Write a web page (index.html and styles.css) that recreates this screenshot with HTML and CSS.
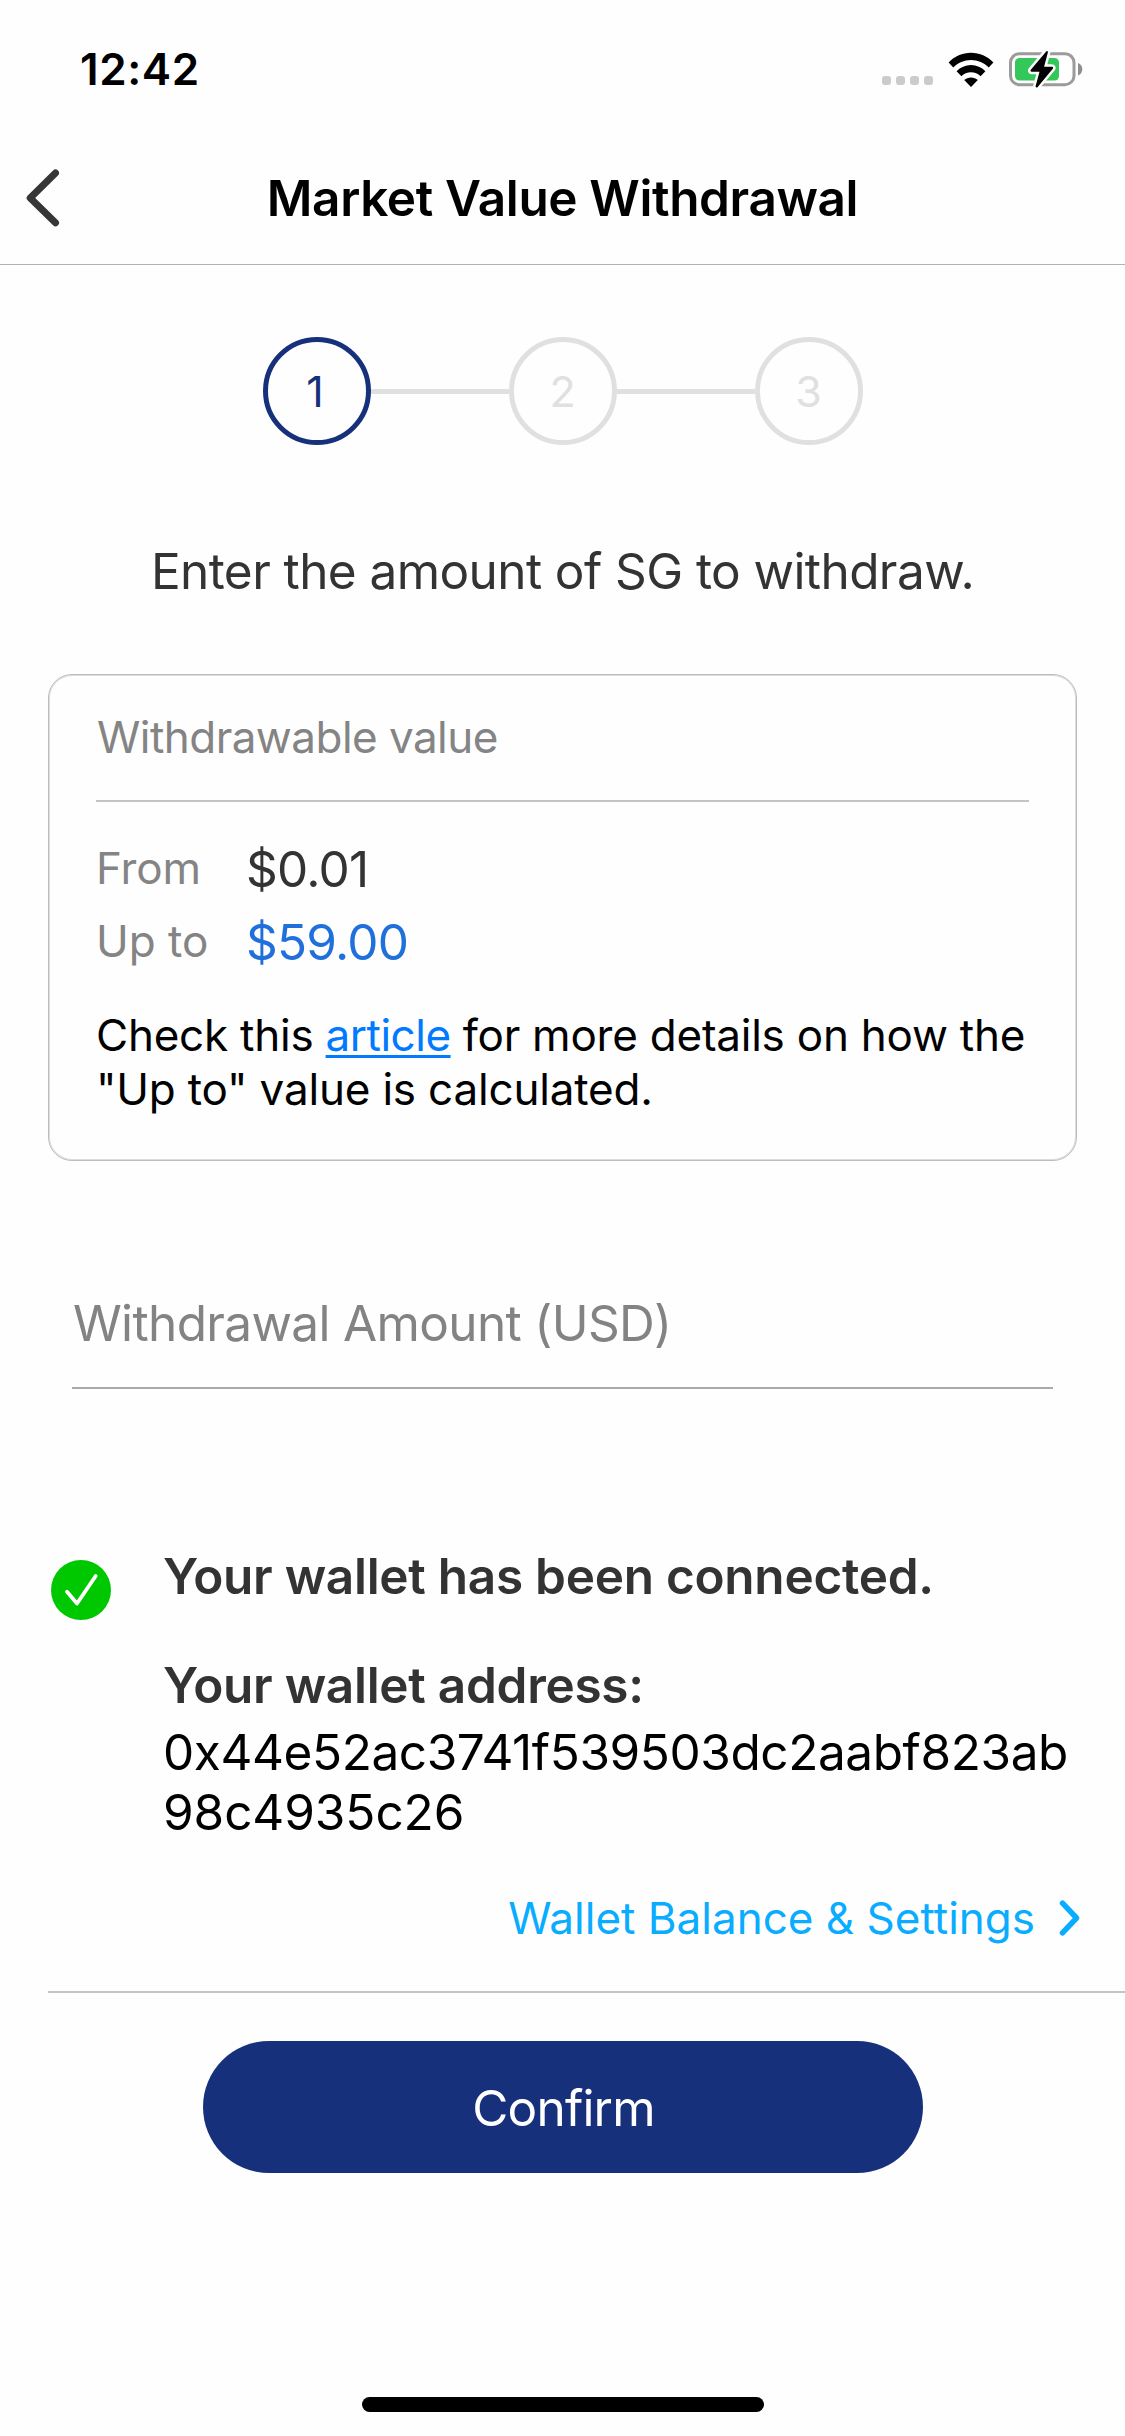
FILE: index.html
```
<!DOCTYPE html>
<html lang="en">
<head>
<meta charset="utf-8">
<title>Market Value Withdrawal</title>
<link rel="stylesheet" href="styles.css">
</head>
<body>
<div class="screen">
  <div class="status">
    <span class="clock">12:42</span>
    <div class="status-icons">
      <div class="cell-dots"><i></i><i></i><i></i><i></i></div>
      <svg class="wifi" width="46" height="35" viewBox="0 0 46 35">
        <path d="M0.6 10.6C6.6 4.300 14.300 0.800 23 0.800S39.400 4.300 45.400 10.600L40.700 15.500C35.900 10.800 29.900 8 23 8S10.100 10.800 5.300 15.500Z"/>
        <path d="M8.600 19.200C12.400 15.300 17.400 13 23 13S33.600 15.300 37.400 19.200L32.600 24.200C30 21.700 26.800 20.200 23 20.200S16 21.700 13.400 24.200Z"/>
        <path d="M16.200 28C18.100 26.300 20.400 25.400 23 25.400S27.900 26.300 29.800 28L23 34.900Z"/>
      </svg>
      <svg class="battery" width="75" height="40" viewBox="-1 0 75 40">
        <rect x="1.500" y="4.700" width="63.500" height="31" rx="9" fill="#fff" stroke="#9b9b9b" stroke-width="3"/>
        <rect x="6" y="9" width="44" height="22.500" rx="4.500" fill="#34c759"/>
        <path d="M69 14C72 15 73.300 17.600 73.300 20.300S72 25.600 69 26.600Z" fill="#8f8f8f"/>
        <path d="M37 2.700L21.800 20.800C21.100 21.700 21.500 22.800 22.700 22.800H30.500L26.700 36.800C26.300 38.600 27.700 39 28.700 37.900L43.800 19.700C44.500 18.800 44.100 17.800 42.900 17.800H35.100L38.800 3.800C39.200 2.100 37.900 1.600 37 2.700Z" fill="#000" stroke="#fff" stroke-width="5" paint-order="stroke"/>
      </svg>
    </div>
  </div>

  <header class="nav">
    <svg class="back" width="34" height="58" viewBox="0 0 34 58"><path d="M29.500 4L4.200 28.900L29.500 53.800"/></svg>
    <h1>Market Value Withdrawal</h1>
  </header>

  <div class="steps">
    <div class="step step-active">1</div>
    <div class="rail"></div>
    <div class="step">2</div>
    <div class="rail"></div>
    <div class="step">3</div>
  </div>

  <p class="prompt">Enter the amount of SG to withdraw.</p>

  <section class="card">
    <h2>Withdrawable value</h2>
    <div class="rows">
      <div class="row"><span class="label">From</span><span class="value">$0.01</span></div>
      <div class="row"><span class="label label-upto">Up to</span><span class="value value-max">$59.00</span></div>
    </div>
    <p class="note">Check this <a class="article">article</a> for more details on how the<br><span class="note-end">"Up to" value is calculated.</span></p>
  </section>

  <div class="field">Withdrawal Amount (USD)</div>

  <section class="wallet">
    <div class="wallet-body">
      <svg class="check" width="60" height="60" viewBox="0 0 60 60">
        <circle cx="30" cy="30" r="30" fill="#00c800"/>
        <path d="M16 31.700L26 43.500L44.700 16" fill="none" stroke="#fff" stroke-width="3.800" stroke-linecap="round" stroke-linejoin="round"/>
      </svg>
      <div class="wallet-text">
        <p class="strong">Your wallet has been connected.</p>
        <p class="strong strong-address">Your wallet address:</p>
        <p class="address">0x44e52ac3741f539503dc2aabf823ab<br><span class="address-end">98c4935c26</span></p>
      </div>
    </div>
    <div class="wallet-link">
      <span>Wallet Balance &amp; Settings</span>
      <svg width="24" height="38" viewBox="0 0 24 38"><path d="M4.500 4.200L18.600 19L4.500 33.800"/></svg>
    </div>
  </section>

  <div class="confirm">Confirm</div>
  <div class="home-bar"></div>
</div>
</body>
</html>
```
FILE: styles.css
```
* { box-sizing: border-box; }

body {
  margin: 0;
  background: #fefefe;
  color: #000;
  font-family: Inter, "Liberation Sans", sans-serif;
  font-size: 49.5px;
}

h1, h2, p { margin: 0; font-weight: 400; }
svg { display: block; flex: none; }

.screen {
  display: flex;
  flex-direction: column;
  width: 1125px;
  height: 2436px;
  overflow: hidden;
}

/* Status bar */
.status {
  display: flex;
  align-items: center;
  justify-content: space-between;
  height: 138px;
  padding: 0 42px 0 80px;
}
.clock { font-size: 44px; font-weight: 600; letter-spacing: 0.6px; }
.status-icons { display: flex; align-items: center; }
.cell-dots { display: flex; gap: 5px; margin: 23px 15px 0 0; }
.cell-dots i { width: 9px; height: 9px; border-radius: 3px; background: #cbcbcb; }
.wifi { margin-right: 14px; }

/* Navigation header */
.nav {
  display: grid;
  grid-template-columns: 200px 1fr 200px;
  align-items: center;
  height: 127px;
  padding-bottom: 6px;
  border-bottom: 1px solid #b2b2b2;
}
.nav h1 {
  font-size: 49.5px;
  font-weight: 600;
  letter-spacing: -0.38px;
  text-align: center;
  white-space: nowrap;
}
.back {
  margin-left: 26px;
  fill: none;
  stroke: #363636;
  stroke-width: 7;
  stroke-linecap: round;
  stroke-linejoin: round;
}

/* Step indicator */
.steps {
  display: flex;
  align-items: center;
  justify-content: center;
  margin-top: 72px;
}
.step {
  display: flex;
  align-items: center;
  justify-content: center;
  width: 108px;
  height: 108px;
  padding-bottom: 1px;
  border: 5px solid #e0e0e0;
  border-radius: 50%;
  color: #e0e0e0;
  font-size: 43px;
}
.step-active { padding-right: 3px; border-color: #16307c; color: #16307c; }
.rail { width: 138px; height: 5px; background: #e0e0e0; }

.prompt {
  margin-top: 96px;
  color: #333;
  line-height: 61px;
  letter-spacing: -0.58px;
  text-align: center;
}

/* Withdrawable value card */
.card {
  height: 487px;
  margin: 72px 48px 0;
  padding: 0 47px;
  border: 1px solid #bcbcbc;
  border-radius: 24px;
  box-shadow: inset 0 0 0 1px #dcdcdc;
}
.card h2 {
  height: 127px;
  border-bottom: 2px solid #c4c4c4;
  color: #848484;
  font-size: 44px;
  line-height: 125px;
  letter-spacing: -0.54px;
  text-indent: 1px;
}
.rows { margin-top: 30px; }
.row { display: flex; align-items: center; height: 73px; }
.label {
  width: 150px;
  padding-bottom: 2px;
  color: #848484;
  font-size: 44px;
  letter-spacing: -0.1px;
}
.label-upto { letter-spacing: 0; }
.value { color: #333; letter-spacing: -0.75px; }
.value-max { color: #2070dc; }
.note {
  margin-top: 30px;
  font-size: 44px;
  line-height: 54px;
  letter-spacing: -0.23px;
  white-space: nowrap;
}
.note-end { letter-spacing: -0.19px; }
.article {
  color: #007aff;
  letter-spacing: -0.5px;
  text-decoration: underline;
  text-decoration-thickness: 3px;
  text-underline-offset: 4px;
  text-decoration-skip-ink: none;
}

/* Amount input */
.field {
  height: 131px;
  margin: 97px 72px 0;
  border-bottom: 2px solid #a9a9a9;
  color: #838383;
  line-height: 130px;
  letter-spacing: -0.65px;
  text-indent: 1px;
}

/* Connected wallet */
.wallet {
  height: 447px;
  margin: 157px 0 0 48px;
  border-bottom: 2px solid #c4c4c4;
}
.wallet-body { display: flex; gap: 52px; padding-left: 3px; line-height: 60px; }
.check { margin-top: 14px; }
.strong { color: #333; font-weight: 600; letter-spacing: -0.27px; }
.strong-address { margin-top: 49px; }
.address { margin-top: 7px; letter-spacing: -0.42px; }
.address-end { letter-spacing: -0.08px; }
.wallet-link {
  display: flex;
  align-items: center;
  justify-content: flex-end;
  gap: 23px;
  margin-top: 46px;
  padding-right: 43px;
  color: #0aacff;
  font-size: 44px;
  line-height: 60px;
}
.wallet-link path {
  fill: none;
  stroke: #0aacff;
  stroke-width: 5.500;
  stroke-linecap: round;
  stroke-linejoin: round;
}

.confirm {
  width: 720px;
  height: 132px;
  margin: 48px auto 0;
  border-radius: 66px;
  background: #16307c;
  color: #fff;
  line-height: 134px;
  letter-spacing: -0.8px;
  text-align: center;
  text-indent: 2px;
}

.home-bar {
  width: 402px;
  height: 15px;
  margin: 224px auto 0;
  border-radius: 8px;
  background: #000;
}
```
